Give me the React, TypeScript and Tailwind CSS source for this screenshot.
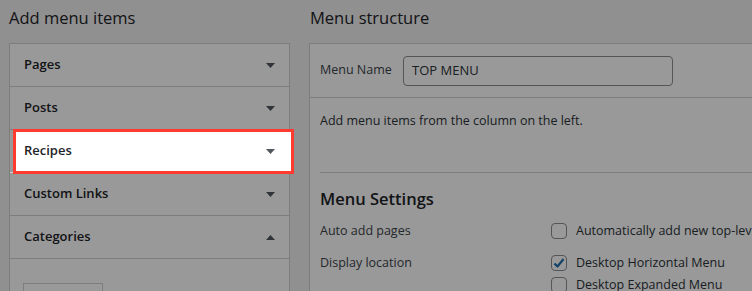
import React from 'react';

const font = "font-['Open_Sans','Noto_Sans',sans-serif]";

function Caret({ up = false }: { up?: boolean }) {
    return (
        <svg width="9" height="5" viewBox="0 0 9 5" className="shrink-0">
            {up ? <path d="M0 5 L4.5 0 L9 5 Z" fill="#50575e" /> : <path d="M0 0 L9 0 L4.5 5 Z" fill="#50575e" />}
        </svg>
    );
}

function Checkbox({ checked = false }: { checked?: boolean }) {
    return (
        <span className="w-4 h-4 shrink-0 rounded-[4px] border border-[#8c8f94] bg-white flex items-center justify-center">
            {checked && (
                <svg width="14" height="14" viewBox="0 0 14 14">
                    <path d="M2.5 7.5 L5.5 10.5 L11.5 3" stroke="#2271b1" strokeWidth="2.2" fill="none" strokeLinejoin="round" />
                </svg>
            )}
        </span>
    );
}

const sections = ['Pages', 'Posts', 'Recipes', 'Custom Links', 'Categories'];

export default function App() {
    return (
        <div className={`relative w-[752px] h-[291px] overflow-hidden bg-[#f0f0f1] text-[#1d2327] ${font} flex pl-[9px]`}>
            {/* left column */}
            <div className="w-[281px] shrink-0">
                <h2 className="pt-[6px] h-[43px] text-[16.5px] leading-6 font-medium">Add menu items</h2>
                <div className="border border-[#d0d1d3] bg-white">
                    {sections.map((s) => {
                        const active = s === 'Recipes';
                        return (
                            <div key={s} className={`relative h-[43px] border-b border-[#d0d1d3] flex items-center justify-between pl-[14px] pr-[14px] ${active ? 'z-50' : ''}`}>
                                {active && (
                                    <div className="absolute left-[3px] right-[-5px] top-[-1px] bottom-[-2px] border-[3px] border-[#ff3b2f] bg-white" />
                                )}
                                <span className="relative text-[13px] font-semibold">{s}</span>
                                <span className="relative"><Caret up={s === 'Categories'} /></span>
                            </div>
                        );
                    })}
                    <div className="h-[60px] pt-[24px] pl-[13px]">
                        <div className="w-[80px] h-[40px] border border-[#d0d1d3] bg-white" />
                    </div>
                </div>
            </div>

            {/* right column */}
            <div className="ml-[19px] flex-1 min-w-0">
                <h2 className="pt-[6px] h-[43px] pl-[1px] text-[16.5px] leading-6 font-medium">Menu structure</h2>
                <div className="border border-r-0 border-[#d0d1d3] bg-white w-[500px]">
                    <div className="h-[54px] border-b border-[#d0d1d3] flex items-center pl-[10px]">
                        <span className="text-[12.5px] text-[#3c434a] w-[83px] shrink-0">Menu Name</span>
                        <div className="w-[270px] h-[30px] rounded-[4px] border border-[#8c8f94] bg-white flex items-center pl-[8px] text-[13px] text-[#2c3338]">TOP MENU</div>
                    </div>
                    <div className="px-[10px]">
                        <p className="pt-[14px] h-[75px] text-[12.5px] text-[#2c3338] border-b border-[#d0d1d3]">Add menu items from the column on the left.</p>
                        <h3 className="pt-[14px] text-[16.5px] leading-6 font-semibold">Menu Settings</h3>
                        <div className="mt-[10px] flex items-center h-[20px] text-[12.5px] whitespace-nowrap">
                            <span className="w-[231px] shrink-0 text-[#3c434a]">Auto add pages</span>
                            <Checkbox />
                            <span className="ml-[9px] text-[#2c3338]">Automatically add new top-level pages to this menu</span>
                        </div>
                        <div className="mt-[12px] flex items-start text-[12.5px] whitespace-nowrap">
                            <span className="w-[231px] shrink-0 text-[#3c434a] leading-5">Display location</span>
                            <div className="flex flex-col gap-[2px]">
                                <div className="flex items-center h-[20px]">
                                    <Checkbox checked />
                                    <span className="ml-[9px] text-[#2c3338]">Desktop Horizontal Menu</span>
                                </div>
                                <div className="flex items-center h-[20px]">
                                    <Checkbox />
                                    <span className="ml-[9px] text-[#2c3338]">Desktop Expanded Menu</span>
                                </div>
                            </div>
                        </div>
                    </div>
                </div>
            </div>

            {/* dim overlay */}
            <div className="absolute inset-0 bg-black/40 z-40 pointer-events-none" />
        </div>
    );
}
